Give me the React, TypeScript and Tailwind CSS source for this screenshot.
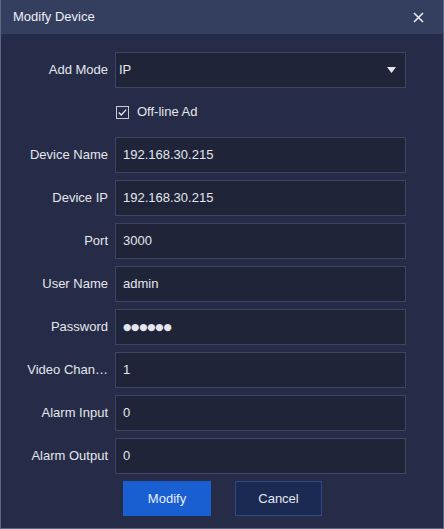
import React from "react";

const rows: { label: string; value: string; pw?: boolean }[] = [
  { label: "Device Name", value: "192.168.30.215" },
  { label: "Device IP", value: "192.168.30.215" },
  { label: "Port", value: "3000" },
  { label: "User Name", value: "admin" },
  { label: "Password", value: "●●●●●●", pw: true },
  { label: "Video Chan…", value: "1" },
  { label: "Alarm Input", value: "0" },
  { label: "Alarm Output", value: "0" },
];

export default function App() {
  return (
    <div
      className="w-[444px] h-[529px] flex flex-col bg-[#262c47] border border-t-0 border-[#5d6681] text-[13px] text-[#e4e6ec]"
      style={{ fontFamily: '"Liberation Sans", Arial, sans-serif' }}
    >
      <div className="h-[34px] shrink-0 flex items-center justify-between bg-[#343f60] pl-[12px] pr-[14px]">
        <span className="text-[13px] text-[#eef0f6]">Modify Device</span>
        <svg width="11" height="11" viewBox="0 0 11 11" className="mr-[5px]">
          <path d="M1 1L10 10M10 1L1 10" stroke="#e8eaf0" strokeWidth="1.6" />
        </svg>
      </div>
      <div className="flex-1 flex flex-col pt-[18px]">
        <div className="flex items-center h-[36px]">
          <div className="w-[107px] text-right">Add Mode</div>
          <div className="ml-[7px] w-[291px] h-[36px] bg-[#1f2439] border border-[#3c4561] flex items-center justify-between pl-[3px] pr-[9px]">
            <span>IP</span>
            <svg width="9" height="6" viewBox="0 0 9 6">
              <path d="M0 0H9L4.5 6Z" fill="#e4e6ec" />
            </svg>
          </div>
        </div>
        <div className="flex items-center h-[16px] mt-[16px] pl-[115px]">
          <svg width="13" height="13" viewBox="0 0 13 13">
            <rect x="0.5" y="0.5" width="12" height="12" fill="none" stroke="#c9ccd6" strokeWidth="1" />
            <path d="M2.8 6.5L5.3 9L10.2 3.6" fill="none" stroke="#e4e6ec" strokeWidth="1.3" />
          </svg>
          <span className="ml-[8px] w-[65px] overflow-hidden whitespace-nowrap">Off-line Ad</span>
        </div>
        <div className="flex flex-col gap-[7px] mt-[17px]">
          {rows.map((r) => (
            <div key={r.label} className="flex items-center h-[36px]">
              <div className="w-[107px] text-right whitespace-nowrap">{r.label}</div>
              <div className="ml-[7px] w-[291px] h-[36px] bg-[#1f2439] border border-[#3c4561] flex items-center pl-[7px]">
                <span
                  className={r.pw ? "text-[9.5px] tracking-[-0.2px]" : ""}
                  style={r.pw ? { fontFamily: '"DejaVu Sans", sans-serif' } : undefined}
                >
                  {r.value}
                </span>
              </div>
            </div>
          ))}
        </div>
        <div className="flex mt-[7px] pl-[122px] gap-[24px]">
          <div className="w-[88px] h-[35px] bg-[#1a5fd2] flex items-center justify-center text-[#e6eeff]">
            Modify
          </div>
          <div className="w-[87px] h-[35px] bg-[#1a2a52] border border-[#2e4a86] flex items-center justify-center text-[#e4e6ec]">
            Cancel
          </div>
        </div>
      </div>
    </div>
  );
}
